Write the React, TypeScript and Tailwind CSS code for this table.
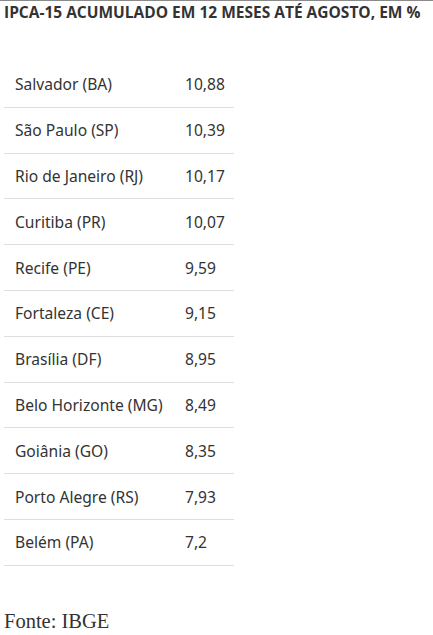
import React from "react";

const rows: [string, string][] = [
  ["Salvador (BA)", "10,88"],
  ["São Paulo (SP)", "10,39"],
  ["Rio de Janeiro (RJ)", "10,17"],
  ["Curitiba (PR)", "10,07"],
  ["Recife (PE)", "9,59"],
  ["Fortaleza (CE)", "9,15"],
  ["Brasília (DF)", "8,95"],
  ["Belo Horizonte (MG)", "8,49"],
  ["Goiânia (GO)", "8,35"],
  ["Porto Alegre (RS)", "7,93"],
  ["Belém (PA)", "7,2"],
];

export default function App() {
  return (
    <div className="w-[433px] h-[635px] bg-white border-t border-[#8a8a8a] overflow-hidden">
      <div className="px-[4px] pt-[1px] text-[15.5px] leading-[20px] font-bold text-[#333]" style={{ fontFamily: '"Open Sans", sans-serif' }}>
        IPCA-15 ACUMULADO EM 12 MESES ATÉ AGOSTO, EM %
      </div>
      <div className="ml-[4px] w-[230px] mt-[40px]" style={{ fontFamily: '"Noto Sans", sans-serif' }}>
        {rows.map(([c, v]) => (
          <div key={c} className="flex h-[45.8px] items-center border-b border-[#dedede] text-[#333] text-[15.6px] leading-[20px]">
            <div className="pl-[11px] w-[181px]">{c}</div>
            <div>{v}</div>
          </div>
        ))}
      </div>
      <div className="px-[4px] mt-[40px] text-[20.5px] text-[#333]" style={{ fontFamily: '"Liberation Serif", serif' }}>
        Fonte: IBGE
      </div>
    </div>
  );
}
